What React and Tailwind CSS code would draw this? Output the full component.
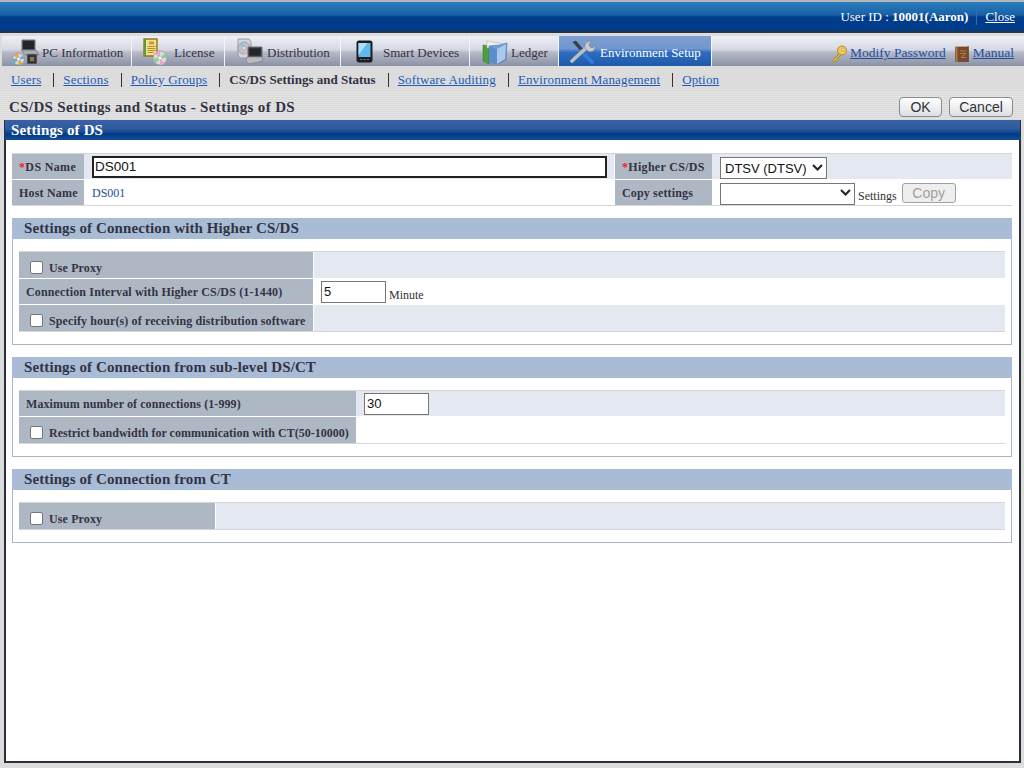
import React from 'react';

const PcIcon = () => (
  <svg width="28" height="28" viewBox="0 0 28 28" className="shrink-0">
    <path d="M10 2h13v10H10z" fill="#3b3d45" stroke="#777" />
    <path d="M11 3h11v8H11z" fill="#23242b" />
    <path d="M9 12h15l3 5H13z" fill="#a9acb4" stroke="#666" strokeWidth="0.6" />
    <circle cx="6.5" cy="21" r="6" fill="#d8d8dc" stroke="#888" strokeWidth="0.6" />
    <path d="M6.5 21L2 17.5A6 6 0 0 1 6.5 15zM6.5 21l4 4.5a6 6 0 0 1-4 1.5z" fill="#e9a33c" />
    <path d="M6.5 21l-6-.5a6 6 0 0 0 2 5zM6.5 21L11 17.5a6 6 0 0 1 1 3.5z" fill="#5fb2d8" />
    <circle cx="6.5" cy="21" r="1.6" fill="#fff" stroke="#888" strokeWidth="0.4" />
    <path d="M15 16h10v10H15z" fill="#34353a" stroke="#999" strokeWidth="0.6" />
    <path d="M18 19h4v4h-4z" fill="#8a7b4c" />
  </svg>
);

const LicenseIcon = () => (
  <svg width="26" height="28" viewBox="0 0 26 28" className="shrink-0">
    <path d="M1 1h13v17H1z" fill="#f3e08c" stroke="#8c7a1e" strokeWidth="1.4" />
    <path d="M1 1h2v17H1z" fill="#5d9a3c" />
    <path d="M6 3.500h5v3H6z" fill="#c99a3c" />
    <path d="M4.500 8.500h8M4.500 10.500h8M4.500 12.500h8M4.500 14.500h6" stroke="#b78a24" strokeWidth="1" />
    <circle cx="17" cy="20" r="7" fill="#dadade" stroke="#8b8b90" strokeWidth="0.6" />
    <path d="M17 20l-5-4.500A7 7 0 0 1 17 13zM17 20l4.500 5.500A7 7 0 0 1 17 27z" fill="#e9a6c8" />
    <path d="M17 20l-7 .5a7 7 0 0 0 2.500 5zM17 20l5-4.500a7 7 0 0 1 2 4.500z" fill="#8fd08c" />
    <circle cx="17" cy="20" r="1.800" fill="#fff" stroke="#888" strokeWidth="0.4" />
  </svg>
);

const DistributionIcon = () => (
  <svg width="28" height="28" viewBox="0 0 28 28" className="shrink-0">
    <path d="M2 1h11l2 3v16H4l-2-3z" fill="#d3d5da" stroke="#8a8c92" strokeWidth="0.8" />
    <circle cx="8" cy="10" r="6" fill="#bfc3c9" stroke="#85878d" strokeWidth="0.6" />
    <path d="M8 10L3.500 6.500A6 6 0 0 1 8 4z" fill="#8fc4dc" />
    <path d="M8 10l4 4.500A6 6 0 0 1 8 16z" fill="#e3b0c8" />
    <circle cx="8" cy="10" r="1.500" fill="#fff" stroke="#777" strokeWidth="0.4" />
    <path d="M12 9h14v10H12z" fill="#3f4148" stroke="#6f7076" />
    <path d="M13.500 10.500h11v7h-11z" fill="#23252b" />
    <path d="M11 19h15l1 4-14 3-3-3z" fill="#b9bbc1" stroke="#6f7076" strokeWidth="0.6" />
  </svg>
);

const PhoneIcon = () => (
  <svg width="17" height="23" viewBox="0 0 17 23" className="shrink-0">
    <rect x="0.500" y="0.500" width="16" height="22" rx="2.500" fill="#1d1e22" />
    <path d="M2.500 3h12v14h-12z" fill="#62b8ea" />
    <path d="M2.500 3h9L2.500 15z" fill="#a9def5" />
    <path d="M4 19.500h2M7.500 19.500h2M11 19.500h2" stroke="#777" strokeWidth="1" />
  </svg>
);

const LedgerIcon = () => (
  <svg width="26" height="26" viewBox="0 0 26 26" className="shrink-0">
    <path d="M1 6l6 1v18l-6-3z" fill="#4f9e3a" stroke="#2f7424" strokeWidth="0.5" />
    <path d="M5 2l16 3v6L5 9z" fill="#f0f0ee" stroke="#a8a8a8" strokeWidth="0.5" />
    <path d="M7 7l11-1 7-2-1 17-9 4-8-2z" fill="#6f9fdb" stroke="#3f6ea8" strokeWidth="0.6" />
    <path d="M15 10l9-5-1 15-8 5z" fill="#a9c8ec" />
    <path d="M7 7l8 3v15l-8-2z" fill="#5b8ccc" />
  </svg>
);

const ToolsIcon = () => (
  <svg width="26" height="24" viewBox="0 0 26 24" className="shrink-0">
    <path d="M3 2l3-1 5 6 3 3-2 2-3-3z" fill="#3b3f48" stroke="#222" strokeWidth="0.4" />
    <path d="M11 11l11 11" stroke="#2f7fdc" strokeWidth="3.600" strokeLinecap="round" />
    <path d="M2 21L16 8" stroke="#bdbec2" strokeWidth="3.600" strokeLinecap="round" />
    <path d="M15 8c-1-4 2-7 7-7l-3 3 1 3 3 1 2-3c1 5-3 8-7 6z" fill="#c9cacd" stroke="#77797e" strokeWidth="0.5" />
  </svg>
);

const KeyIcon = () => (
  <svg width="17" height="18" viewBox="0 0 17 18" className="shrink-0">
    <path d="M8 9L1.500 15.500l1.500 1.500 1.500-1.500 1 1 1.500-2-1-1 4-3" fill="#e3b63f" stroke="#a27b17" strokeWidth="0.8" />
    <circle cx="11" cy="5.500" r="4.500" fill="#efc95a" stroke="#a27b17" strokeWidth="0.8" />
    <circle cx="12" cy="4.500" r="1.300" fill="#fff4c9" stroke="#a27b17" strokeWidth="0.5" />
  </svg>
);

const BookIcon = () => (
  <svg width="14" height="16" viewBox="0 0 14 16" className="shrink-0">
    <path d="M0.500 1h11l2-.5v15h-13z" fill="#7c4a2a" stroke="#5c351c" strokeWidth="0.6" />
    <path d="M0.500 1h2v15h-2z" fill="#a87a4a" />
    <path d="M5 5h6M5 7.500h6l-5 4h5" stroke="#b68a5a" strokeWidth="0.8" fill="none" />
  </svg>
);

const Chevron = ({ className }) => (
  <svg width="11" height="7" viewBox="0 0 11 7" className={`absolute pointer-events-none ${className}`}>
    <path d="M1 1l4.500 4.500L10 1" fill="none" stroke="#222" strokeWidth="2" />
  </svg>
);

const tabs = [
  { label: 'PC Information', icon: PcIcon, w: 'w-[130px]', pl: 'pl-[10px]', gap: 'gap-[2px]' },
  { label: 'License', icon: LicenseIcon, w: 'w-[93px]', pl: 'pl-[11px]', gap: 'gap-[5px]' },
  { label: 'Distribution', icon: DistributionIcon, w: 'w-[116px]', pl: 'pl-[11px]', gap: 'gap-[3px]' },
  { label: 'Smart Devices', icon: PhoneIcon, w: 'w-[129px]', pl: 'pl-[15px]', gap: 'gap-[10px]' },
  { label: 'Ledger', icon: LedgerIcon, w: 'w-[89px]', pl: 'pl-[12px]', gap: 'gap-[3px]' },
  { label: 'Environment Setup', icon: ToolsIcon, w: 'w-[153px]', pl: 'pl-[11px]', gap: 'gap-[4px]', active: true },
];

const subLinks = ['Users', 'Sections', 'Policy Groups', 'CS/DS Settings and Status', 'Software Auditing', 'Environment Management', 'Option'];

const Check = () => (
  <input type="checkbox" className="appearance-none w-[13px] h-[13px] bg-white border border-[#767676] rounded-[2px] shrink-0 -mt-[1px]" />
);

const Label = ({ children, className = '' }) => (
  <div className={`bg-[#aeb8c4] flex items-center text-[12px] font-bold text-[#333344] shrink-0 ${className}`}>{children}</div>
);

const CheckLabel = ({ text, width, spacing = 'tracking-[0.12px]' }) => (
  <Label className={`${width} ${spacing} pl-[11px] gap-[6px] pt-[5px]`}>
    <Check />
    <span>{text}</span>
  </Label>
);

const Section = ({ title, height, children }) => (
  <section className={`mx-[6px] border border-[#a9b4c4] ${height}`}>
    <h2 className="h-[21px] -m-px mb-0 bg-[#a8bcd6] pl-[12px] flex items-center text-[15px] leading-none font-bold tracking-[0.1px] text-[#333344]">{title}</h2>
    <div className="mx-[6px] mt-[12px] border-t border-b border-[#d4d6da]">{children}</div>
  </section>
);

const TextBox = ({ value, className = '' }) => (
  <input
    readOnly
    value={value}
    className={`h-[22px] bg-white border border-[#767676] px-[2px] text-[13px] text-[#111] font-['Liberation_Sans',sans-serif] ${className}`}
  />
);

export default function App() {
  return (
    <div className="w-[1024px] h-[768px] overflow-hidden flex flex-col bg-[#dcdcdc] font-['Liberation_Serif',serif] border-t-2 border-[#b4b8bc]">
      {/* title bar */}
      <header className="h-[31px] shrink-0 pt-[1px] bg-[linear-gradient(#2a80bd_0%,#1a5fa6_45%,#003c8c_52%,#003c8c_100%)] border-b-2 border-[#2b3444] flex items-center justify-end pr-[9px] text-[13px] text-white">
        <span>User ID : <b>10001(Aaron)</b></span>
        <span className="w-px h-[16px] bg-[#3d6aa5] mx-[8px]"></span>
        <a className="underline text-[13px]">Close</a>
      </header>

      {/* main tabs */}
      <nav className="h-[30px] mt-[3px] shrink-0 flex bg-[linear-gradient(#eef0f5_0%,#d6d9e3_45%,#b5b9c8_55%,#8b92a5_100%)]">
        <div className="w-[2px] shrink-0 bg-[#dcdcdc]"></div>
        {tabs.map(t => (
          <div
            key={t.label}
            className={`${t.w} ${t.pl} ${t.gap} pt-[1px] shrink-0 flex items-center text-[13px] border-r border-[#f4f5f8] ${t.active ? 'bg-[linear-gradient(#7f9fd0_0%,#7097d0_42%,#2e6cc0_55%,#1d5aaa_100%)] text-white' : 'text-[#333344]'}`}
          >
            <t.icon />
            <span className="whitespace-nowrap mt-[3px]">{t.label}</span>
          </div>
        ))}
        <div className="flex-1 flex items-center justify-end pr-[10px] pt-[5px] text-[13.500px] text-[#1f4f9f]">
          <KeyIcon />
          <a className="underline ml-[2px]">Modify Password</a>
          <span className="ml-[9px]"><BookIcon /></span>
          <a className="underline ml-[4px]">Manual</a>
        </div>
      </nav>

      {/* sub navigation */}
      <div className="h-[25px] mt-[1px] shrink-0 flex items-center pl-[11px] text-[13px]">
        {subLinks.map((s, i) => (
          <React.Fragment key={s}>
            {i > 0 && <span className="w-px h-[14px] bg-[#333] ml-[12px] mr-[9px]"></span>}
            {s.startsWith('CS/DS')
              ? <b className="text-[#333344]">{s}</b>
              : <a className="underline text-[#1f5bb5] tracking-[0.15px]">{s}</a>}
          </React.Fragment>
        ))}
      </div>

      {/* page title */}
      <div className="h-[28px] shrink-0 pt-[2px] flex items-center justify-between pl-[9px] pr-[11px] bg-[repeating-linear-gradient(#e4e4e4_0px,#e4e4e4_1px,#d9d9d9_1px,#d9d9d9_2px)]">
        <h1 className="text-[15px] font-bold text-[#333344] tracking-[0.35px] mt-[1px]">CS/DS Settings and Status - Settings of DS</h1>
        <div className="flex gap-[7px] font-['Liberation_Sans',sans-serif] text-[14px] text-[#333]">
          <button className="w-[43px] h-[20px] rounded-[4px] border border-[#8a8a8a] bg-[linear-gradient(#ffffff,#dcdfe4)] leading-none">OK</button>
          <button className="w-[64px] h-[20px] rounded-[4px] border border-[#8a8a8a] bg-[linear-gradient(#ffffff,#dcdfe4)] leading-none">Cancel</button>
        </div>
      </div>

      {/* content panel */}
      <main className="flex-1 ml-[4px] mr-[3px] mb-[5px] bg-white border-r-2 border-b-2 border-l-2 border-[#2b3040] flex flex-col min-h-0">
        <div className="h-[20px] shrink-0 -mx-px pl-[6px] flex items-center bg-[linear-gradient(#3a60a4_0%,#2f5a9e_45%,#003c88_70%,#154d96_100%)] text-[15px] font-bold text-white tracking-[0.15px]">Settings of DS</div>

        <div className="mx-[6px] mt-[13px] border-t border-b border-[#d4d6da] w-[1000px]">
          <div className="flex h-[26px] border-b border-white">
            <Label className="w-[72px] pl-[7px] tracking-[0.35px]"><span className="text-[#f02020]">*</span>DS Name</Label>
            <div className="w-[530px] bg-[#e4e8f0] pl-[8px] flex items-center">
              <input readOnly value="DS001" className="w-[515px] h-[22px] bg-white border-2 border-[#222] px-[1px] text-[13.500px] text-[#111] font-['Liberation_Sans',sans-serif]" />
            </div>
            <div className="w-px bg-white"></div>
            <Label className="w-[97px] pl-[7px] tracking-[0.3px]"><span className="text-[#f02020]">*</span>Higher CS/DS</Label>
            <div className="flex-1 bg-[#e4e8f0] pl-[8px] flex items-center">
              <div className="relative w-[107px] h-[22px]">
                <select className="appearance-none w-full h-full bg-white border border-[#767676] pl-[4px] text-[13px] text-[#111] font-['Liberation_Sans',sans-serif]">
                  <option>DTSV (DTSV)</option>
                </select>
                <Chevron className="right-[4px] top-[8px]" />
              </div>
            </div>
          </div>
          <div className="flex h-[25px]">
            <Label className="w-[72px] pl-[7px] tracking-[0.2px]">Host Name</Label>
            <div className="w-[530px] pl-[8px] flex items-center text-[12px] text-[#1b4f8f]">DS001</div>
            <div className="w-px bg-white"></div>
            <Label className="w-[97px] pl-[7px] tracking-[0.15px]">Copy settings</Label>
            <div className="flex-1 pl-[8px] flex items-center">
              <div className="relative w-[135px] h-[22px]">
                <select className="appearance-none w-full h-full bg-white border border-[#767676] text-[13px] font-['Liberation_Sans',sans-serif]"><option></option></select>
                <Chevron className="right-[4px] top-[7px]" />
              </div>
              <span className="ml-[3px] mt-[7px] text-[12px] text-[#333]">Settings</span>
              <button disabled className="ml-[5px] w-[54px] h-[20px] rounded-[3px] border border-[#a0a0a0] bg-[#eeeeee] text-[14px] leading-none text-[#a0a0a0] font-['Liberation_Sans',sans-serif]">Copy</button>
            </div>
          </div>
        </div>

        <div className="mt-[12px] flex flex-col gap-[12px] w-[1012px]">
          <Section title="Settings of Connection with Higher CS/DS" height="h-[127px]">
            <div className="flex h-[27px] border-b border-white">
              <CheckLabel text="Use Proxy" width="w-[294px]" />
              <div className="w-px bg-white"></div>
              <div className="flex-1 bg-[#e4e8f0]"></div>
            </div>
            <div className="flex h-[26px] border-b border-white">
              <Label className="w-[294px] pl-[7px] tracking-[0.15px]">Connection Interval with Higher CS/DS (1-1440)</Label>
              <div className="flex-1 pl-[8px] flex items-center">
                <TextBox value="5" className="w-[65px]" />
                <span className="ml-[3px] mt-[7px] text-[12px] text-[#333]">Minute</span>
              </div>
            </div>
            <div className="flex h-[26px]">
              <CheckLabel text="Specify hour(s) of receiving distribution software" width="w-[294px]" />
              <div className="w-px bg-white"></div>
              <div className="flex-1 bg-[#e4e8f0]"></div>
            </div>
          </Section>

          <Section title="Settings of Connection from sub-level DS/CT" height="h-[100px]">
            <div className="flex h-[26px] border-b border-white">
              <Label className="w-[337px] pl-[7px] tracking-[0.08px]">Maximum number of connections (1-999)</Label>
              <div className="flex-1 bg-[#e4e8f0] pl-[8px] flex items-center">
                <TextBox value="30" className="w-[65px]" />
              </div>
            </div>
            <div className="flex h-[26px]">
              <CheckLabel text="Restrict bandwidth for communication with CT(50-10000)" width="w-[337px]" spacing="tracking-[0.02px]" />
            </div>
          </Section>

          <Section title="Settings of Connection from CT" height="h-[74px]">
            <div className="flex h-[26px]">
              <CheckLabel text="Use Proxy" width="w-[196px]" />
              <div className="w-px bg-white"></div>
              <div className="flex-1 bg-[#e4e8f0]"></div>
            </div>
          </Section>
        </div>
      </main>
    </div>
  );
}
